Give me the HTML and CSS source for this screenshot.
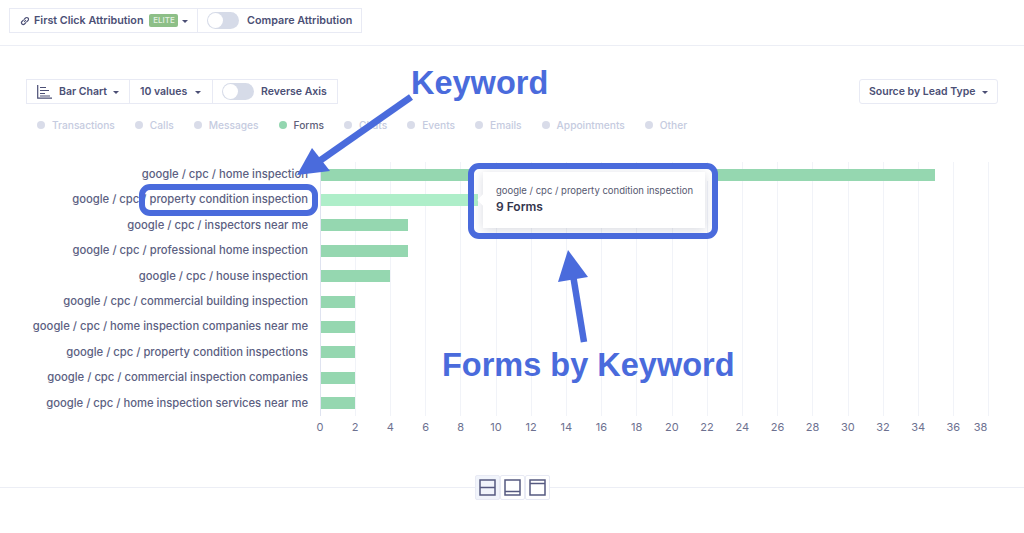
FILE: index.html
```html
<!DOCTYPE html>
<html lang="en">
<head>
<meta charset="UTF-8">
<meta name="viewport" content="width=device-width, initial-scale=1.0">
<title>Source by Lead Type</title>
<link rel="stylesheet" href="styles.css">
</head>
<body>
<div class="top-bar">
    <div class="btn-group">
        <div class="btn attr-btn">
            <svg class="link-icon" width="10" height="10" viewBox="0 0 10 10"><path d="M4.2 5.8 5.8 4.2M3.6 3.9 2 5.5a1.6 1.6 0 0 0 2.5 2.5l1.6-1.6M3.9 3.6 5.5 2A1.6 1.6 0 0 1 8 4.5L6.4 6.1" fill="none" stroke="#4b4f75" stroke-width="1.1"/></svg>
            <span>First Click Attribution</span>
            <span class="elite">ELITE</span>
            <span class="caret"></span>
        </div>
        <div class="btn toggle-btn">
            <span class="toggle"></span>
            <span>Compare Attribution</span>
        </div>
    </div>
</div>

<div class="chart-tools">
    <div class="btn-group">
        <div class="btn type-btn">
            <svg width="15" height="14" viewBox="0 0 15 14"><path d="M.7 0v13.2H15M3 2.5h6M3 5.5h9M3 8.5h5M3 11h10" fill="none" stroke="#4b4f75" stroke-width="1.2"/></svg>
            <span>Bar Chart</span>
            <span class="caret"></span>
        </div>
        <div class="btn values-btn">
            <span>10 values</span>
            <span class="caret"></span>
        </div>
        <div class="btn toggle-btn reverse">
            <span class="toggle"></span>
            <span>Reverse Axis</span>
        </div>
    </div>
    <div class="btn single">
        <span>Source by Lead Type</span>
        <span class="caret"></span>
    </div>
</div>

<div class="legend">
    <span class="legend-item">Transactions</span>
    <span class="legend-item">Calls</span>
    <span class="legend-item">Messages</span>
    <span class="legend-item on">Forms</span>
    <span class="legend-item">Chats</span>
    <span class="legend-item">Events</span>
    <span class="legend-item">Emails</span>
    <span class="legend-item">Appointments</span>
    <span class="legend-item">Other</span>
</div>

<div class="chart">
    <div class="labels">
        <div>google / cpc / home inspection</div>
        <div>google / cpc / property condition inspection</div>
        <div>google / cpc / inspectors near me</div>
        <div>google / cpc / professional home inspection</div>
        <div>google / cpc / house inspection</div>
        <div>google / cpc / commercial building inspection</div>
        <div>google / cpc / home inspection companies near me</div>
        <div>google / cpc / property condition inspections</div>
        <div>google / cpc / commercial inspection companies</div>
        <div>google / cpc / home inspection services near me</div>
    </div>
    <div class="plot">
        <div class="bar-row"><div class="bar first" style="width: 614px"></div></div>
        <div class="bar-row"><div class="bar hover" style="width: 157px"></div></div>
        <div class="bar-row"><div class="bar" style="width: 87px"></div></div>
        <div class="bar-row"><div class="bar" style="width: 87px"></div></div>
        <div class="bar-row"><div class="bar" style="width: 69px"></div></div>
        <div class="bar-row"><div class="bar" style="width: 34px"></div></div>
        <div class="bar-row"><div class="bar" style="width: 34px"></div></div>
        <div class="bar-row"><div class="bar" style="width: 34px"></div></div>
        <div class="bar-row"><div class="bar" style="width: 34px"></div></div>
        <div class="bar-row"><div class="bar" style="width: 34px"></div></div>
    </div>
    <div class="ticks">
        <span>0</span><span>2</span><span>4</span><span>6</span><span>8</span>
        <span>10</span><span>12</span><span>14</span><span>16</span><span>18</span>
        <span>20</span><span>22</span><span>24</span><span>26</span><span>28</span>
        <span>30</span><span>32</span><span>34</span><span>36</span><span class="last">38</span>
    </div>
</div>

<div class="bottom-bar">
    <div class="bottom-line"></div>
    <div class="view-btns">
        <div class="view-btn active">
            <svg width="17" height="17" viewBox="0 0 17 17"><rect x="1" y="1" width="15" height="15" fill="none" stroke="#555980" stroke-width="1.5"/><path d="M1 8.5h15" stroke="#555980" stroke-width="1.5"/></svg>
        </div>
        <div class="view-btn">
            <svg width="17" height="17" viewBox="0 0 17 17"><rect x="1" y="1" width="15" height="15" fill="none" stroke="#555980" stroke-width="1.5"/><path d="M1 12.5h15" stroke="#555980" stroke-width="1.5"/></svg>
        </div>
        <div class="view-btn">
            <svg width="17" height="17" viewBox="0 0 17 17"><rect x="1" y="1" width="15" height="15" fill="none" stroke="#555980" stroke-width="1.5"/><path d="M1 4.5h15" stroke="#555980" stroke-width="1.5"/></svg>
        </div>
    </div>
    <div class="bottom-line"></div>
</div>

<!-- tooltip and the blue notes drawn on top of the chart -->
<div class="tooltip">
    <div class="tooltip-title">google / cpc / property condition inspection</div>
    <div class="tooltip-value">9 Forms</div>
</div>
<div class="mark mark-label"></div>
<div class="mark mark-tooltip"></div>
<div class="note note-keyword">Keyword</div>
<div class="note note-forms">Forms by Keyword</div>
<svg class="arrows" width="1024" height="533" viewBox="0 0 1024 533">
    <path d="M411 97 318 162" fill="none" stroke="#4a6bdc" stroke-width="7"/>
    <path d="M297 175 312 148 330 171Z" fill="#4a6bdc"/>
    <path d="M584 342 573 275" fill="none" stroke="#4a6bdc" stroke-width="6.5"/>
    <path d="M568 250 558 282 588 277Z" fill="#4a6bdc"/>
</svg>
</body>
</html>
```

FILE: styles.css
```css
* {
    box-sizing: border-box;
}
body {
    font-family: Inter, "Liberation Sans", sans-serif;
    background-color: #fff;
    color: #4b4f75;
    margin: 0;
    height: 533px;
    overflow: hidden;
    position: relative;
    font-size: 10.5px;
}
.top-bar {
    height: 46px;
    padding: 8px 9px 0;
    border-bottom: 1px solid #eceef5;
    font-size: 10.75px;
}
.btn-group {
    display: flex;
}
.btn {
    height: 25px;
    display: flex;
    align-items: center;
    border: 1px solid #e8eaf4;
    background-color: #fff;
    font-weight: 600;
    white-space: nowrap;
}
.btn-group .btn + .btn {
    margin-left: -1px;
}
.attr-btn {
    width: 189px;
    padding-left: 10px;
}
.link-icon {
    margin-right: 4px;
}
.elite {
    margin-left: 6px;
    margin-right: 4px;
    width: 29px;
    height: 13px;
    line-height: 13px;
    text-align: center;
    background-color: #8dbf87;
    color: #e6f2e4;
    font-size: 8px;
    font-weight: 500;
    border-radius: 2px;
}
.caret {
    width: 0;
    height: 0;
    border-left: 3px solid transparent;
    border-right: 3px solid transparent;
    border-top: 3px solid #4b4f75;
    margin-top: 2px;
}
.toggle-btn {
    width: 165px;
    padding-left: 9px;
}
.toggle {
    width: 32px;
    height: 17px;
    border-radius: 9px;
    background-color: #d6dbe8;
    margin-right: 8px;
    position: relative;
}
.toggle::after {
    content: "";
    position: absolute;
    left: 1px;
    top: 1px;
    width: 15px;
    height: 15px;
    border-radius: 50%;
    background-color: #fff;
}
.chart-tools {
    margin: 33px 26px 0;
    display: flex;
    justify-content: space-between;
}
.type-btn {
    width: 104px;
    padding-left: 10px;
}
.type-btn svg {
    margin-right: 7px;
}
.type-btn .caret {
    margin-left: 6px;
}
.values-btn {
    width: 84px;
    padding-left: 10px;
}
.values-btn .caret {
    margin-left: 8px;
}
.reverse {
    width: 126px;
    padding-left: 9px;
}
.reverse .toggle {
    margin-right: 7px;
}
.single {
    width: 139px;
    padding-left: 9px;
    border-radius: 3px;
}
.single .caret {
    margin-left: 7px;
}
.legend {
    display: flex;
    gap: 20px;
    margin: 14px 0 0 37px;
    height: 14px;
    align-items: center;
    font-size: 10.2px;
}
.legend-item {
    display: flex;
    align-items: center;
    color: #c5cbe0;
    font-weight: 500;
}
.legend-item::before {
    content: "";
    width: 8px;
    height: 8px;
    border-radius: 50%;
    background-color: #d9dce9;
    margin-right: 7px;
}
.legend-item.on {
    color: #5d6079;
}
.legend-item.on::before {
    background-color: #93d6b0;
}
.chart {
    display: grid;
    grid-template-columns: 320px 704px;
    margin-top: 30px;
}
.labels > div {
    height: 25.4px;
    line-height: 25.4px;
    text-align: right;
    padding-right: 12px;
    color: #5c5f82;
    font-weight: 500;
    font-size: 11.25px;
    white-space: nowrap;
}
.plot {
    height: 254px;
    border-left: 1px solid #dfe3f0;
    background-image: repeating-linear-gradient(to right, transparent 0, transparent 33.8px, #f1f3f8 33.8px, #f1f3f8 34.8px, transparent 34.8px, transparent 35.2px);
    width: 669px;
}
.bar-row {
    height: 25.4px;
    display: flex;
    align-items: center;
}
.bar {
    height: 12px;
    background-color: #95d7b0;
}
.bar.first {
    background: linear-gradient(to right, #95d7b0 150px, #fff 150px, #fff 393px, #95d7b0 393px);
}
.bar.hover {
    background-color: #aeeec9;
}
.ticks {
    grid-column: 2;
    display: flex;
    margin-top: 3px;
    color: #6d7190;
    font-size: 11px;
    height: 16px;
    line-height: 16px;
}
.ticks span {
    flex: 0 0 16px;
    margin: 0 19.2px 0 0;
    text-align: center;
    position: relative;
    left: -8px;
}
.ticks .last {
    left: -16px;
}
.bottom-bar {
    display: flex;
    align-items: center;
    margin-top: 40px;
}
.bottom-line {
    flex: 1;
    height: 1px;
    background-color: #eceef5;
}
.view-btns {
    display: flex;
}
.view-btn {
    width: 25px;
    height: 25px;
    display: flex;
    align-items: center;
    justify-content: center;
    border: 1px solid #e8eaf4;
    border-radius: 2px;
    background-color: #fff;
}
.view-btn.active {
    background-color: #f1f4fb;
}
.tooltip {
    position: absolute;
    left: 483px;
    top: 172px;
    width: 222px;
    height: 56px;
    background-color: #fff;
    padding: 13px 13px;
    box-shadow: 0 2px 10px rgba(40, 50, 90, 0.18);
}
.tooltip::before {
    content: "";
    position: absolute;
    left: -4px;
    top: 24px;
    width: 8px;
    height: 8px;
    background-color: #fff;
    transform: rotate(45deg);
}
.tooltip-title {
    font-size: 9.5px;
    color: #55586f;
    white-space: nowrap;
}
.tooltip-value {
    font-size: 12px;
    font-weight: 600;
    color: #33354d;
    margin-top: 3px;
}
.mark {
    position: absolute;
    border: 6px solid #4a6bdc;
}
.mark-label {
    left: 139px;
    top: 184px;
    width: 179px;
    height: 32px;
    border-radius: 11px;
}
.mark-tooltip {
    left: 468px;
    top: 163px;
    width: 250px;
    height: 76px;
    border-radius: 11px;
}
.note {
    position: absolute;
    color: #4a6bdc;
    font-size: 32.5px;
    font-weight: 700;
    font-family: "Liberation Sans", sans-serif;
    white-space: nowrap;
}
.note-keyword {
    left: 411px;
    top: 65px;
}
.note-forms {
    left: 442px;
    top: 347px;
}
.arrows {
    position: absolute;
    left: 0;
    top: 0;
}
```
